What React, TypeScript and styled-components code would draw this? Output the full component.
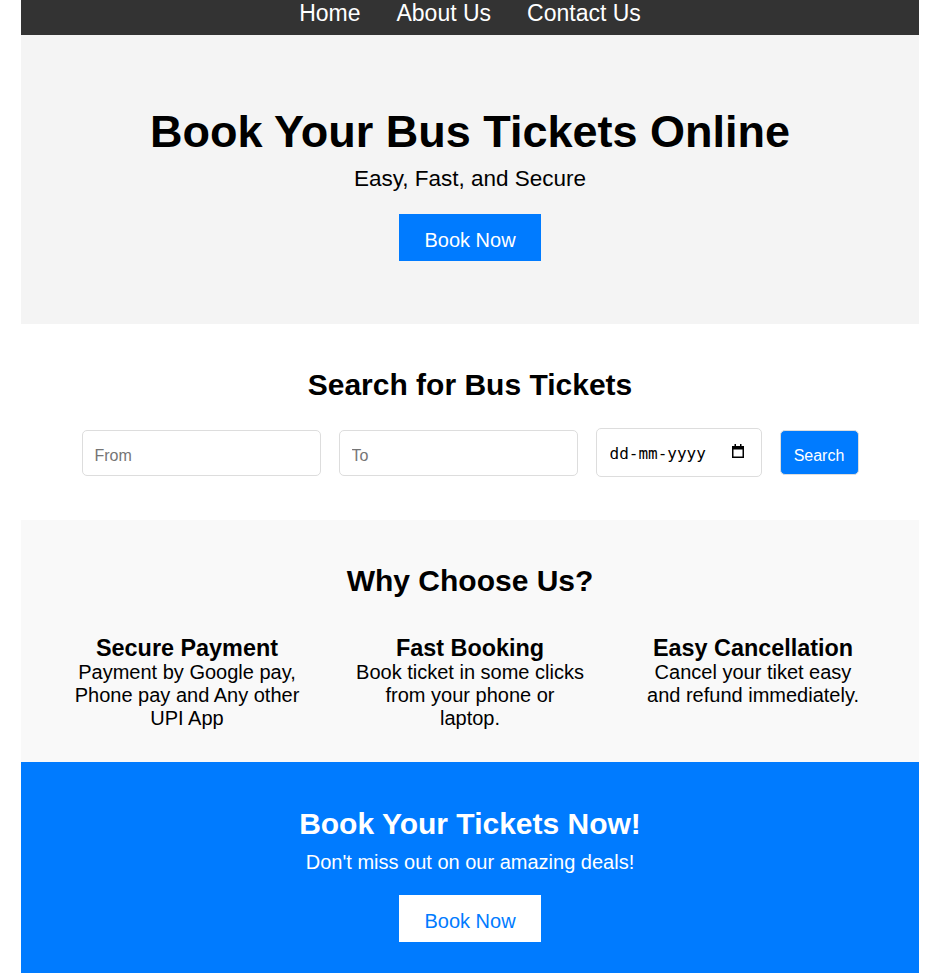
import React from "react";
import styled, { createGlobalStyle } from "styled-components";

const GlobalStyle = createGlobalStyle`
  html, body {
    margin: 0;
    padding: 0;
    background: #ffffff;
  }
  body {
    font-family: "Liberation Sans", Arial, sans-serif;
    font-size: 20px;
    color: #000;
  }
  * { box-sizing: border-box; }
`;

const Page = styled.div`
  padding: 0 18px 0 21px;
`;

const Container = styled.div`
  width: 898px;
`;

const Nav = styled.nav`
  background: #333333;
  height: 35px;
  display: flex;
  justify-content: center;
  align-items: flex-start;
  gap: 36px;
`;

const NavLink = styled.a`
  color: #ffffff;
  text-decoration: none;
  font-size: 23px;
  line-height: 27px;
`;

const Hero = styled.section`
  background: #f4f4f4;
  padding: 71px 20px 63px;
  display: flex;
  flex-direction: column;
  align-items: center;
  text-align: center;
`;

const HeroTitle = styled.h1`
  margin: 0;
  font-size: 45px;
  line-height: 52px;
  font-weight: bold;
`;

const HeroText = styled.p`
  margin: 8px 0 22px;
  font-size: 22.5px;
  line-height: 26px;
`;

const Button = styled.a<{ $inverse?: boolean }>`
  display: inline-block;
  background: ${(p) => (p.$inverse ? "#ffffff" : "#007bff")};
  color: ${(p) => (p.$inverse ? "#007bff" : "#ffffff")};
  font-size: 20px;
  line-height: 23px;
  padding: 15px 25px 9px;
  text-decoration: none;
  cursor: pointer;
`;

const SearchSection = styled.section`
  background: #ffffff;
  padding: 44px 20px 43px;
  text-align: center;
`;

const SectionTitle = styled.h2<{ $light?: boolean }>`
  margin: 0;
  font-size: 30px;
  line-height: 34px;
  font-weight: bold;
  color: ${(p) => (p.$light ? "#ffffff" : "#000000")};
`;

const SearchForm = styled.form`
  margin-top: 26px;
  display: flex;
  justify-content: center;
  align-items: center;
  gap: 18px;
`;

const TextInput = styled.input`
  width: 239px;
  height: 46px;
  padding: 6px 12px 0;
  border: 1px solid #dddddd;
  border-radius: 5px;
  font-family: "Liberation Sans", Arial, sans-serif;
  font-size: 16px;
  color: #000;
  background: #fff;
  outline: none;
  &::placeholder {
    color: #757575;
  }
`;

const DateField = styled.label`
  width: 166px;
  height: 49px;
  padding: 2px 17px 0 13px;
  border: 1px solid #dddddd;
  border-radius: 5px;
  background: #fff;
  display: flex;
  align-items: center;
  justify-content: space-between;
  cursor: text;
`;

const DateText = styled.input`
  width: 100px;
  border: none;
  padding: 0;
  margin: 0;
  outline: none;
  background: transparent;
  font-family: "DejaVu Sans Mono", "Liberation Mono", monospace;
  font-size: 16px;
  color: #000;
  &::placeholder {
    color: #000;
    opacity: 1;
  }
`;

const CalendarIcon = styled.svg`
  width: 12px;
  height: 14px;
  flex: none;
  margin-top: -5px;
`;

const SearchButton = styled.button`
  width: 79px;
  height: 45px;
  border: 1px solid #dddddd;
  border-radius: 5px;
  background: #007bff;
  color: #ffffff;
  font-family: "Liberation Sans", Arial, sans-serif;
  font-size: 16px;
  padding: 6px 0 0;
  cursor: pointer;
`;

const Features = styled.section`
  background: #f9f9f9;
  padding: 44px 20px 32px;
  text-align: center;
`;

const FeatureGrid = styled.div`
  margin-top: 37px;
  display: grid;
  grid-template-columns: repeat(3, 230px);
  column-gap: 53px;
  justify-content: center;
`;

const Feature = styled.div`
  text-align: center;
`;

const FeatureTitle = styled.h3`
  margin: 0;
  font-size: 23.4px;
  line-height: 26px;
  font-weight: bold;
`;

const FeatureText = styled.p`
  margin: 0;
  font-size: 20px;
  line-height: 23px;
`;

const Cta = styled.section`
  background: #007bff;
  color: #ffffff;
  padding: 45px 20px 40px;
  display: flex;
  flex-direction: column;
  align-items: center;
  text-align: center;
`;

const CtaText = styled.p`
  margin: 10px 0 21px;
  font-size: 20px;
  line-height: 23px;
`;

const features = [
  {
    title: "Secure Payment",
    text: "Payment by Google pay, Phone pay and Any other UPI App",
  },
  {
    title: "Fast Booking",
    text: "Book ticket in some clicks from your phone or laptop.",
  },
  {
    title: "Easy Cancellation",
    text: "Cancel your tiket easy and refund immediately.",
  },
];

export default function App() {
  return (
    <Page>
      <GlobalStyle />
      <Container>
        <Nav>
          <NavLink href="#">Home</NavLink>
          <NavLink href="#">About Us</NavLink>
          <NavLink href="#">Contact Us</NavLink>
        </Nav>
        <Hero>
          <HeroTitle>Book Your Bus Tickets Online</HeroTitle>
          <HeroText>Easy, Fast, and Secure</HeroText>
          <Button href="#">Book Now</Button>
        </Hero>
        <SearchSection>
          <SectionTitle>Search for Bus Tickets</SectionTitle>
          <SearchForm onSubmit={(e) => e.preventDefault()}>
            <TextInput type="text" placeholder="From" />
            <TextInput type="text" placeholder="To" />
            <DateField>
              <DateText type="text" placeholder="dd-mm-yyyy" />
              <CalendarIcon viewBox="0 0 12 14" aria-hidden="true">
                <rect x="2.5" y="0" width="1.5" height="3" fill="#000" />
                <rect x="8" y="0" width="1.5" height="3" fill="#000" />
                <rect x="0" y="2" width="12" height="3.5" fill="#000" />
                <rect
                  x="0.75"
                  y="2.75"
                  width="10.5"
                  height="10.5"
                  fill="none"
                  stroke="#000"
                  strokeWidth="1.5"
                />
              </CalendarIcon>
            </DateField>
            <SearchButton type="submit">Search</SearchButton>
          </SearchForm>
        </SearchSection>
        <Features>
          <SectionTitle>Why Choose Us?</SectionTitle>
          <FeatureGrid>
            {features.map((f) => (
              <Feature key={f.title}>
                <FeatureTitle>{f.title}</FeatureTitle>
                <FeatureText>{f.text}</FeatureText>
              </Feature>
            ))}
          </FeatureGrid>
        </Features>
        <Cta>
          <SectionTitle $light>Book Your Tickets Now!</SectionTitle>
          <CtaText>Don't miss out on our amazing deals!</CtaText>
          <Button href="#" $inverse>
            Book Now
          </Button>
        </Cta>
      </Container>
    </Page>
  );
}
